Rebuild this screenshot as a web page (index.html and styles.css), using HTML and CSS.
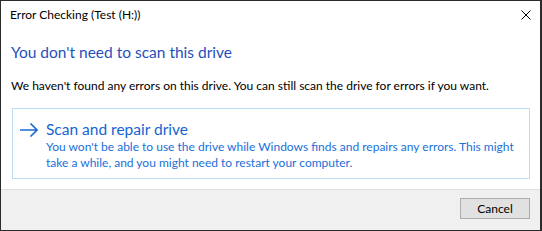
FILE: index.html
```html
<!DOCTYPE html>
<html>
<head>
<meta charset="utf-8">
<link rel="stylesheet" href="styles.css">
</head>
<body>
<div class="window">
  <div class="titlebar">
    <span class="title">Error Checking (Test (H:))</span>
    <svg class="close" width="10" height="10" viewBox="0 0 10 10"><path d="M0.5 0.5 L9.5 9.5 M9.5 0.5 L0.5 9.5" stroke="#000" stroke-width="1" fill="none"/></svg>
  </div>
  <div class="content">
    <h1 class="heading">You don't need to scan this drive</h1>
    <p class="body-text">We haven't found any errors on this drive. You can still scan the drive for errors if you want.</p>
    <div class="cmdlink">
      <svg class="arrow" width="18" height="14" viewBox="0 0 18 14"><path d="M0 7 H17 M10.5 0.5 L17 7 L10.5 13.5" stroke="#1b6ad6" stroke-width="1.6" fill="none"/></svg>
      <div class="cl-text">
        <div class="cl-title">Scan and repair drive</div>
        <div class="cl-desc">You won't be able to use the drive while Windows finds and repairs any errors. This might take a while, and you might need to restart your computer.</div>
      </div>
    </div>
  </div>
  <div class="footer">
    <button class="btn">Cancel</button>
  </div>
</div>
</body>
</html>
```

FILE: styles.css
```css
* { box-sizing: border-box; }
html, body { margin: 0; padding: 0; background: #fff; }
body { font-family: Lato, "Noto Sans", sans-serif; }
.window {
  width: 542px;
  height: 231px;
  border-top: 1px solid #2b2b2b;
  border-left: 1px solid #2b2b2b;
  border-right: 2px solid #2b2b2b;
  border-bottom: 1px solid #2b2b2b;
  display: flex;
  flex-direction: column;
  background: #fff;
}
.titlebar {
  height: 32px;
  padding: 6px 9px 0 9px;
  display: flex;
  justify-content: space-between;
  align-items: flex-start;
}
.title {
  font-size: 12px;
  line-height: 16px;
  color: #000;
}
.close { margin-top: 3px; }
.content {
  flex: 1;
  padding: 9px 10px 0 10px;
}
.heading {
  margin: 0;
  font-weight: normal;
  font-size: 15.5px;
  line-height: 20px;
  color: #1f50bd;
}
.body-text {
  margin: 16px 0 0 0;
  font-size: 12px;
  line-height: 16px;
  color: #000;
}
.cmdlink {
  margin: 14px 0 0 1px;
  border: 1px solid #bcdcf4;
  padding: 10px 8px 7px 7px;
  display: flex;
  gap: 8px;
}
.arrow { margin-top: 4px; flex: none; }
.cl-title {
  font-size: 15.5px;
  line-height: 20px;
  color: #1464d2;
}
.cl-desc {
  font-size: 12px;
  line-height: 16px;
  color: #1a6fd9;
}
.footer {
  height: 41px;
  border-top: 1px solid #dfdfdf;
  background: #f0f0f0;
  display: flex;
  justify-content: flex-end;
  align-items: flex-start;
  padding: 8px 10px 0 0;
}
.btn {
  width: 70px;
  height: 21px;
  background: #e1e1e1;
  border: 1px solid #adadad;
  font-family: Lato, "Noto Sans", sans-serif;
  font-size: 12px;
  line-height: 17px;
  color: #000;
  padding: 0;
  margin: 0;
}
```
